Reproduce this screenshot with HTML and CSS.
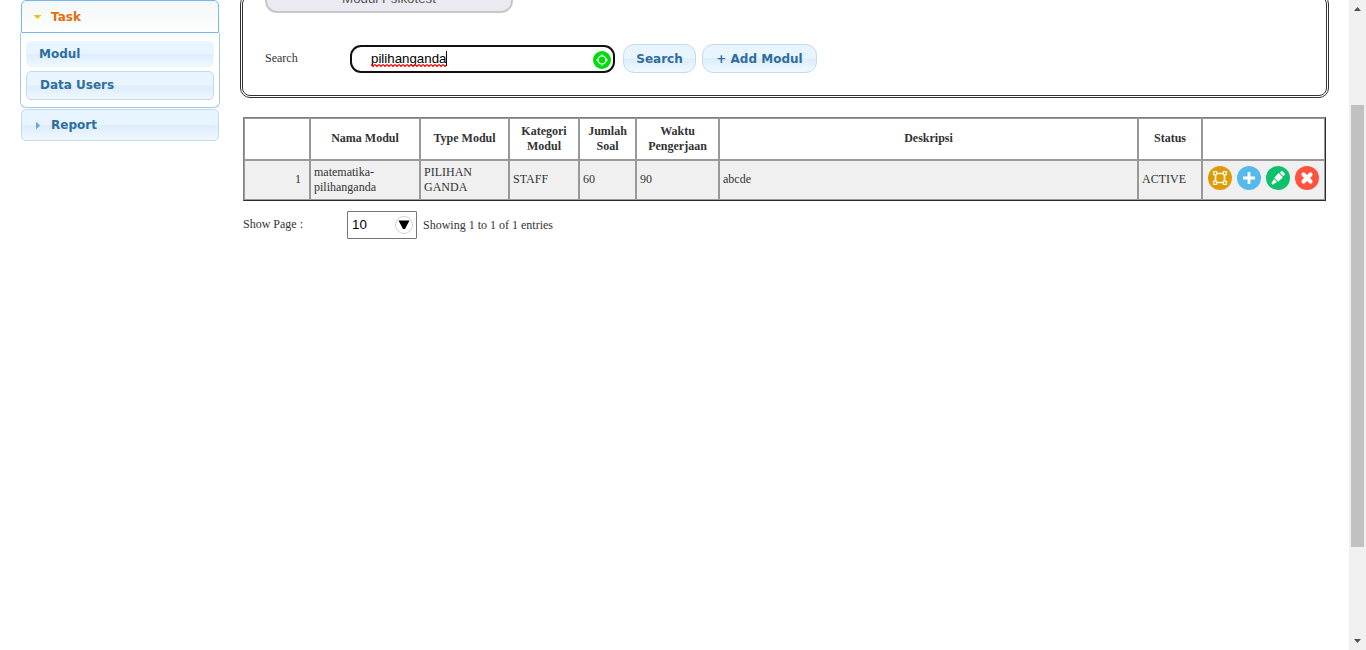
FILE: index.html
```html
<!DOCTYPE html>
<html lang="id">
<head>
<meta charset="utf-8">
<title>Modul Psikotest</title>
<link rel="stylesheet" href="styles.css">
</head>
<body>
<div class="page">
  <nav class="sidebar">
    <div class="acc-head acc-active"><svg class="acc-arrow" width="9" height="9" viewBox="0 0 9 9"><path d="M0.5 3h8l-4 4z" fill="#fabd05"/></svg><span>Task</span></div>
    <div class="acc-body">
      <a class="item item-current">Modul</a>
      <a class="item">Data Users</a>
    </div>
    <div class="acc-head acc-closed"><svg class="acc-arrow" width="9" height="9" viewBox="0 0 9 9"><path d="M3 0.5v8l4-4z" fill="#6da8d5"/></svg><span>Report</span></div>
  </nav>
  <main class="main">
    <section class="panel">
      <div class="title">Modul Psikotest</div>
      <div class="search-row">
        <label class="label">Search</label>
        <div class="field"><span class="value">pilihanganda<svg class="squiggle" width="75" height="3" viewBox="0 0 75 3"><defs><pattern id="wave" width="4" height="3" patternUnits="userSpaceOnUse"><path d="M0 0.5l2 2l2-2" fill="none" stroke="#f00" stroke-width="1.2"/></pattern></defs><rect width="75" height="3" fill="url(#wave)"/></svg></span><span class="caret"></span>
          <svg class="badge" width="18" height="18" viewBox="0 0 18 18"><circle cx="9" cy="9" r="9" fill="#00dc0b"/><circle cx="9" cy="9" r="4" fill="none" stroke="#dfffdc" stroke-width="1.5"/><path d="M9 3.500v1.500M9 13v1.500M3.500 9H5M13 9h1.500" stroke="#dfffdc" stroke-width="2"/></svg>
        </div>
        <button class="btn btn-search">Search</button>
        <button class="btn btn-add">+ Add Modul</button>
      </div>
    </section>
    <table class="grid">
      <colgroup><col class="c0"><col class="c1"><col class="c2"><col class="c3"><col class="c4"><col class="c5"><col class="c6"><col class="c7"><col class="c8"></colgroup>
      <tr class="head"><th></th><th>Nama Modul</th><th>Type Modul</th><th class="two">Kategori<br>Modul</th><th class="two">Jumlah<br>Soal</th><th class="two">Waktu<br>Pengerjaan</th><th>Deskripsi</th><th>Status</th><th></th></tr>
      <tr class="row"><td class="num">1</td><td class="two">matematika-<br>pilihanganda</td><td class="two">PILIHAN<br>GANDA</td><td>STAFF</td><td>60</td><td>90</td><td>abcde</td><td>ACTIVE</td>
        <td><div class="actions">
          <svg width="24" height="24" viewBox="0 0 24 24"><circle cx="12" cy="12" r="12" fill="#df9a08"/><path d="M7.500 7.500h9v9h-9z" fill="none" stroke="#fff7df" stroke-width="1.700"/><g fill="#df9a08" stroke="#fff7df" stroke-width="1.300"><path d="M5.600 5.600h3v3h-3zM15.400 5.600h3v3h-3zM5.600 15.400h3v3h-3zM15.400 15.400h3v3h-3z"/></g></svg>
          <svg width="24" height="24" viewBox="0 0 24 24"><circle cx="12" cy="12" r="12" fill="#56b9eb"/><path d="M12 6v12M6 12h12" stroke="#fff" stroke-width="2.800"/></svg>
          <svg width="24" height="24" viewBox="0 0 24 24"><circle cx="12" cy="12" r="12" fill="#0dc16c"/><g transform="translate(12 12) rotate(45)" fill="#fff"><rect x="-2.500" y="-8" width="5" height="3" rx="1"/><rect x="-2.900" y="-4" width="5.800" height="6.500"/><path d="M-2.200 3.500h4.400L0.900 8.500h-1.800z"/></g></svg>
          <svg width="24" height="24" viewBox="0 0 24 24"><circle cx="12" cy="12" r="12" fill="#fe533f"/><path d="M8.500 8.500l7 7M15.500 8.500l-7 7" stroke="#fff" stroke-width="4.200" stroke-linecap="round"/></svg>
        </div></td></tr>
    </table>
    <div class="pager">
      <span class="show">Show Page :</span>
      <div class="select"><span>10</span><svg width="18" height="18" viewBox="0 0 18 18"><circle cx="9" cy="9" r="8.500" fill="#fff" stroke="#d3d3d3"/><path d="M3.500 4.500h11l-4.500 8.500H8z" fill="#000"/></svg></div>
      <span class="info">Showing 1 to 1 of 1 entries</span>
    </div>
  </main>
  <div class="scrollbar">
    <svg width="7" height="4" viewBox="0 0 7 4"><path d="M0 4L3.500 0L7 4z" fill="#505050"/></svg>
    <div class="thumb"></div>
    <svg class="down" width="7" height="4" viewBox="0 0 7 4"><path d="M0 0L3.500 4L7 0z" fill="#505050"/></svg>
  </div>
</div>
</body>
</html>
```
FILE: styles.css
```css
* { box-sizing: border-box; }
body { margin: 0; background: #fff; color: #333; font: 12px/15px "Liberation Serif", serif; overflow: hidden; }
.page { display: flex; height: 650px; overflow: hidden; }
.sidebar { width: 200px; margin-left: 20px; flex: none; }
.acc-head, .item, .btn { font: bold 12px/18px "DejaVu Sans", sans-serif; color: #2e6e9e; white-space: nowrap; }
.acc-head, .item, .btn { border: 1px solid #c5dbec; background: linear-gradient(#e8f4ff 0, #e8f4fe 48%, #dcedfc 52%, #f0f8ff 100%); }
.acc-head { display: flex; align-items: center; margin: 0 1px; padding-left: 11px; border-radius: 5px; }
.acc-arrow { margin-right: 9px; }
.acc-active { height: 33px; color: #e17009; border-color: #79b7e7; border-radius: 5px 5px 0 0; background: linear-gradient(#f3f7f9, #fdfefd); }
.acc-closed { height: 32px; margin-top: 1px; }
.acc-body { height: 75px; padding: 8px 5px 7px; border: 1px solid #a6c9e2; border-top: 0; border-radius: 0 0 6px 6px; background: linear-gradient(#f9fcfb, #fff 12px); }
.item { display: block; height: 29px; border-radius: 5px; padding: 4px 0 0 13px; }
.item-current { height: 26px; margin-bottom: 4px; padding: 3px 0 0 12px; border-color: #edf6fe; }
.main { width: 1089px; margin-left: 20px; flex: none; }
.panel { height: 104px; margin-top: -6px; border: 3px double #333; border-radius: 10px; padding: 0 22px; }
.title { width: 248px; height: 46px; margin-top: -30px; border: 2px solid #c7c7ce; border-radius: 12px; background: #eaeaf0; font: 13.3px/16px "Liberation Sans", sans-serif; text-align: center; padding-top: 22px; color: #555; }
.search-row { display: flex; align-items: center; height: 29px; margin-top: 31px; }
.label { width: 85px; }
.field { display: flex; align-items: center; width: 265px; height: 28px; border: 2px solid #101010; border-radius: 11px; padding: 0 2px 0 19px; margin-right: 8px; color: #000; font: 13.3px/16px "Liberation Sans", sans-serif; }
.value { position: relative; }
.squiggle { position: absolute; left: 0; bottom: 0; }
.caret { width: 1px; height: 15px; background: #000; }
.badge { margin: 2px 0 0 auto; }
.btn { height: 29px; border-radius: 11px; padding: 0; }
.btn-search { width: 73px; margin-right: 6px; }
.btn-add { width: 115px; }
.grid { width: 1083px; margin: 19px 0 0 3px; table-layout: fixed; border-spacing: 0; border: 1px solid; border-color: #808080 #2c2c2c #2c2c2c #808080; }
.grid th, .grid td { border: 1px solid #999; padding: 0 3px 2px; text-align: left; white-space: nowrap; }
.grid th { text-align: center; }
.grid .two { padding-bottom: 0; }
.head { height: 42px; }
.row { height: 40px; background: #f0f0f0; }
.grid .num { text-align: right; padding-right: 8px; }
.c0 { width: 66px; } .c1 { width: 110px; } .c2 { width: 89px; } .c3 { width: 70px; } .c4 { width: 57px; } .c5 { width: 83px; } .c6 { width: 419px; } .c7 { width: 64px; } .c8 { width: 123px; }
.actions { display: flex; gap: 5px; padding: 0 0 2px 2px; }
.pager { display: flex; align-items: center; height: 28px; margin: 10px 0 0 3px; }
.show { width: 104px; padding-bottom: 2px; }
.select { display: flex; align-items: center; justify-content: space-between; width: 70px; height: 28px; border: 1px solid #767676; border-radius: 1px; padding: 0 3px 1px 4px; margin-right: 6px; color: #000; font: 13.3px/16px "Liberation Sans", sans-serif; }
.info { padding-top: 1px; }
.scrollbar { width: 17px; margin-left: auto; flex: none; background: #f0f0f0; display: flex; flex-direction: column; align-items: center; padding: 7px 0; }
.thumb { width: 13px; height: 442px; margin-top: 94px; background: #c1c1c1; }
.down { margin-top: auto; }
```
